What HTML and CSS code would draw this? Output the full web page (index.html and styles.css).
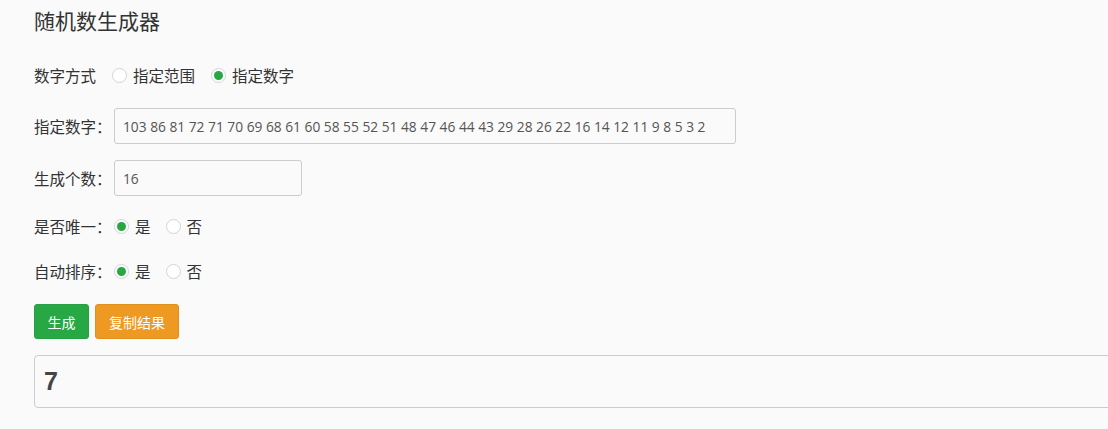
FILE: index.html
```html
<!DOCTYPE html>
<html lang="zh-CN">
<head>
<meta charset="utf-8">
<title>随机数生成器</title>
<link rel="stylesheet" href="styles.css">
</head>
<body>
<div class="page">
  <h1 class="title">随机数生成器</h1>

  <div class="row row-mode">
    <span class="label">数字方式</span>
    <label class="opt"><span class="radio"></span><span>指定范围</span></label>
    <label class="opt"><span class="radio checked"></span><span>指定数字</span></label>
  </div>

  <div class="row row-input">
    <span class="label">指定数字：</span>
    <div class="input input-wide">103 86 81 72 71 70 69 68 61 60 58 55 52 51 48 47 46 44 43 29 28 26 22 16 14 12 11 9 8 5 3 2</div>
  </div>

  <div class="row row-input">
    <span class="label">生成个数：</span>
    <div class="input input-narrow">16</div>
  </div>

  <div class="row row-radio">
    <span class="label">是否唯一：</span>
    <label class="opt"><span class="radio checked"></span><span>是</span></label>
    <label class="opt"><span class="radio"></span><span>否</span></label>
  </div>

  <div class="row row-radio">
    <span class="label">自动排序：</span>
    <label class="opt"><span class="radio checked"></span><span>是</span></label>
    <label class="opt"><span class="radio"></span><span>否</span></label>
  </div>

  <div class="buttons">
    <button class="btn btn-green">生成</button>
    <button class="btn btn-orange">复制结果</button>
  </div>

  <div class="result">7</div>
</div>
</body>
</html>
```

FILE: styles.css
```css
html, body {
  margin: 0;
  padding: 0;
  background: #fafafa;
  overflow: hidden;
}
body {
  font-family: "Noto Sans CJK SC", "Open Sans", sans-serif;
  color: #333;
  font-size: 15.5px;
}
.page {
  padding-left: 34px;
  display: flex;
  flex-direction: column;
}
.title {
  margin: 0;
  height: 40px;
  line-height: 40px;
  font-size: 21px;
  font-weight: normal;
  color: #333;
}
.row {
  display: flex;
  align-items: center;
}
.row-mode {
  margin-top: 17px;
  height: 36px;
}
.row-input {
  height: 36px;
  margin-top: 15px;
}
.row-input + .row-input {
  margin-top: 16px;
}
.row-radio {
  height: 30px;
  margin-top: 15px;
}
.label {
  white-space: nowrap;
  width: 80px;
  flex: none;
}
.row-mode .label {
  width: 78px;
}
.opt {
  display: flex;
  align-items: center;
  margin-right: 15px;
}
.row-mode .opt {
  margin-right: 16px;
}
.radio {
  box-sizing: border-box;
  width: 15px;
  height: 15px;
  border: 1px solid #d4d4d4;
  border-radius: 50%;
  background: #fff;
  margin-right: 6px;
  display: flex;
  align-items: center;
  justify-content: center;
}
.radio.checked::after {
  content: "";
  width: 9px;
  height: 9px;
  border-radius: 50%;
  background: #28a745;
}
.input {
  box-sizing: border-box;
  height: 36px;
  border: 1px solid #ccc;
  border-radius: 3px;
  background: #fafafa;
  padding: 0 8px;
  display: flex;
  align-items: center;
  font-family: "Open Sans", sans-serif;
  font-size: 13.75px;
  color: #555;
  white-space: nowrap;
}
.input-wide {
  width: 622px;
}
.input-narrow {
  width: 188px;
}
.buttons {
  display: flex;
  gap: 6px;
  margin-top: 18px;
}
.btn {
  box-sizing: border-box;
  height: 35px;
  padding: 0;
  border-radius: 3px;
  font-family: "Noto Sans CJK SC", sans-serif;
  font-size: 14px;
  color: #fff;
  cursor: pointer;
}
.btn-green {
  background: #28a745;
  border: 1px solid #26a042;
  width: 55px;
}
.btn-orange {
  background: #ee9a22;
  border: 1px solid #e0901d;
  width: 84px;
}
.result {
  box-sizing: border-box;
  margin-top: 16px;
  height: 53px;
  width: 1100px;
  border: 1px solid #ccc;
  border-radius: 4px;
  padding-left: 9px;
  display: flex;
  align-items: center;
  font-family: "Liberation Sans", Arial, sans-serif;
  font-weight: bold;
  font-size: 25px;
  color: #444;
}
```
